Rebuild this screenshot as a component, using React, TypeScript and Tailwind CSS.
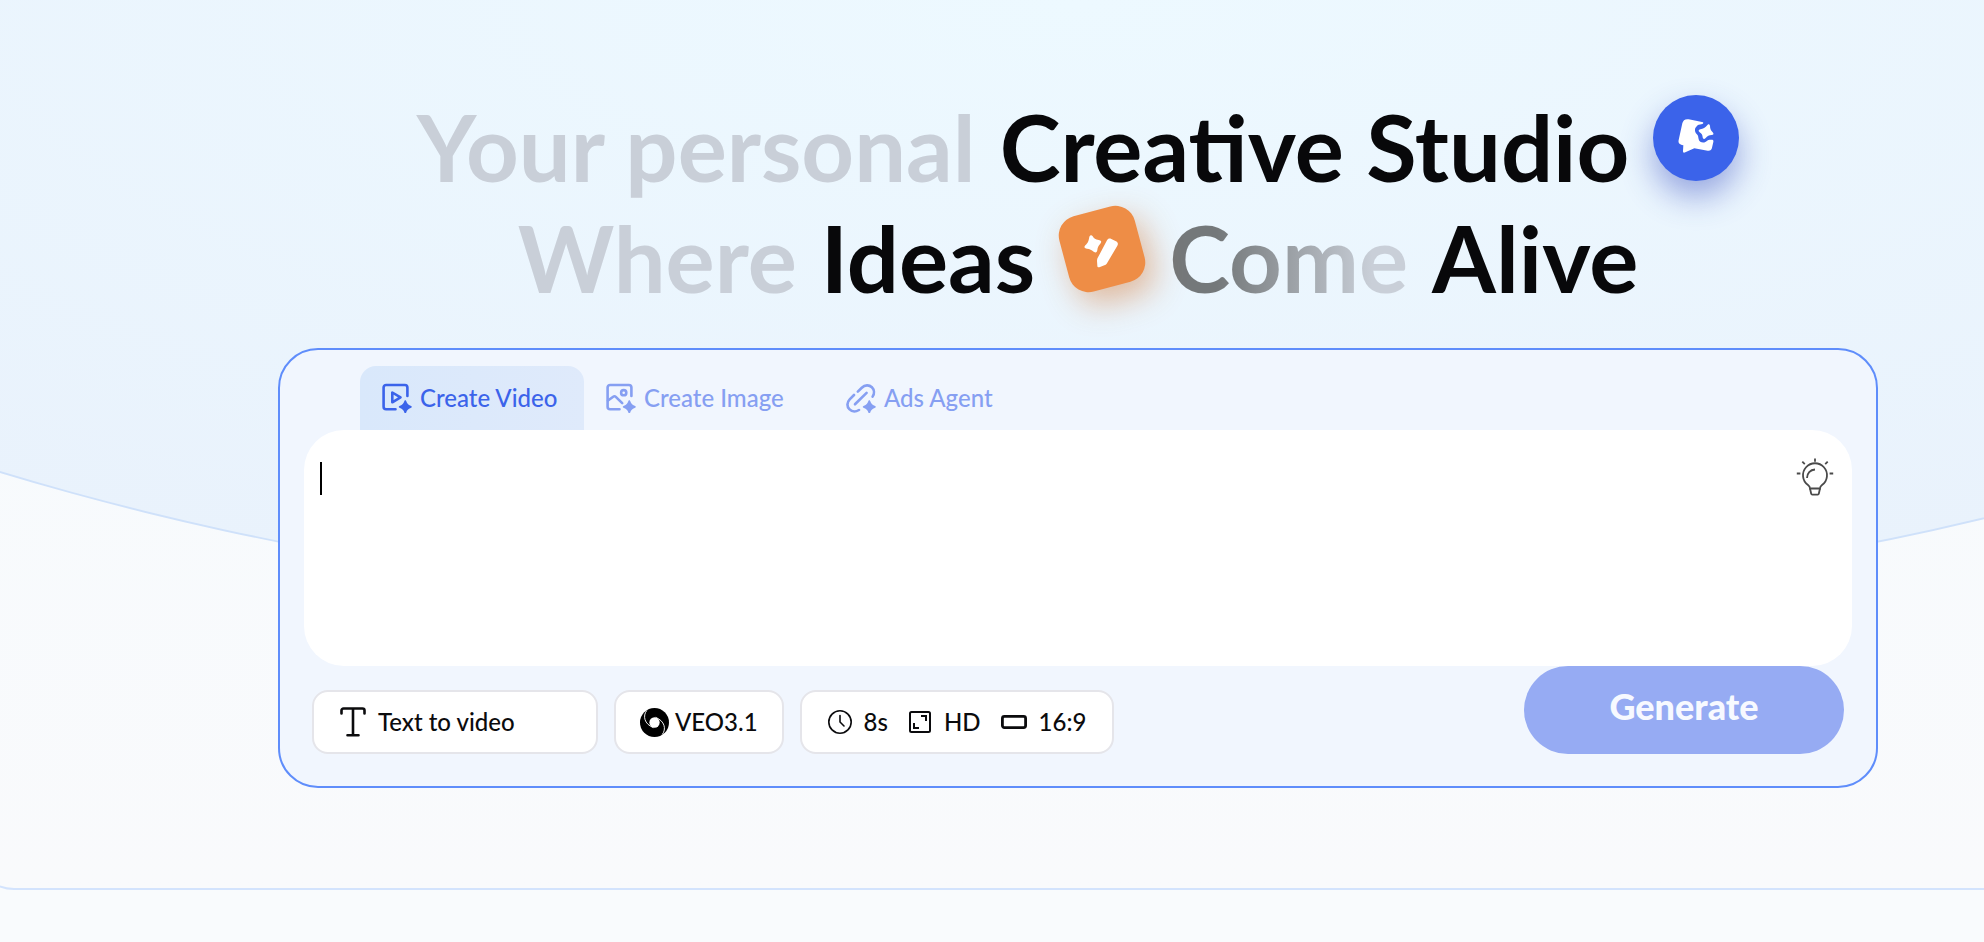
import { useState } from "react";

const tabs = [
  { id: "video", label: "Create Video", icon: VideoSparkIcon, width: "w-56" },
  { id: "image", label: "Create Image", icon: ImageSparkIcon, width: "w-60" },
  { id: "ads", label: "Ads Agent", icon: LinkSparkIcon, width: "w-56" },
];

const spark =
  "M23.3 17.2c.6 0 .8.5 1 1.1.8 2.3 1.9 3.5 4.3 4.4.7.3 1.2.5 1.2 1.1s-.5.8-1.2 1.1c-2.4.9-3.5 2.1-4.3 4.4-.2.6-.4 1.1-1 1.1s-.8-.5-1-1.1c-.8-2.3-1.9-3.5-4.3-4.4-.7-.3-1.2-.5-1.2-1.1s.5-.8 1.2-1.1c2.4-.9 3.5-2.1 4.3-4.4.2-.6.4-1.1 1-1.1z";

const frame =
  "M25.4 13V4.5a2.5 2.5 0 0 0-2.5-2.5H4.1a2.5 2.5 0 0 0-2.5 2.5v19.3a2.5 2.5 0 0 0 2.5 2.5h9.4";

function VideoSparkIcon() {
  return (
    <svg className="size-[30px] shrink-0" viewBox="0 0 30 30" fill="none" stroke="currentColor" strokeWidth="2.6" strokeLinecap="round" strokeLinejoin="round">
      <path d={frame} />
      <path d="M10.3 9.5v9.8l8.2-4.9z" />
      <path d={spark} fill="currentColor" stroke="none" />
    </svg>
  );
}

function ImageSparkIcon() {
  return (
    <svg className="size-[30px] shrink-0" viewBox="0 0 30 30" fill="none" stroke="currentColor" strokeWidth="2.6" strokeLinecap="round" strokeLinejoin="round">
      <path d={frame} />
      <circle cx="17.7" cy="9.7" r="2.6" />
      <path d="M2 17.5l5.2-3.8a2 2 0 0 1 2.6.2l6.4 6.2" />
      <path d={spark} fill="currentColor" stroke="none" />
    </svg>
  );
}

function LinkSparkIcon() {
  return (
    <svg className="size-[30px] shrink-0" viewBox="0 0 30 30" fill="none" stroke="currentColor" strokeWidth="2.6" strokeLinecap="round" strokeLinejoin="round">
      <path d="M9 21.3L20.6 9.9" />
      <path d="M11.8 8.6l4-3.9c3.1-3 7.4-3 10.1-.4 2.5 2.5 2.7 6.3.7 9.3" />
      <path d="M8 12l-4.3 4.3c-2.9 3-2.9 7.3-.4 9.9 2.6 2.6 6.5 2.8 9.7.8" />
      <path d={spark} fill="currentColor" stroke="none" />
    </svg>
  );
}

function BulbIcon() {
  return (
    <svg className="size-[38px]" viewBox="0 0 38 38" fill="none" stroke="currentColor" strokeWidth="1.8">
      <path d="M14 30.5c0-1.6-.4-2.3-2-3.5a12 12 0 1 1 14 0c-1.6 1.2-2 1.9-2 3.5z" />
      <path d="M14 30.5l1.2 5.2c.1.6.5.9 1.1.9h5.4c.6 0 1-.3 1.1-.9l1.2-5.2" />
      <path d="M11 20c0-4.7 3.2-8.2 8-8.5" />
      <path d="M19 .5v3.2M.8 15.5h3.6M33.6 15.5h3.6M6.3 3.6l2.5 2.5M31.7 3.6l-2.5 2.5" />
    </svg>
  );
}

function TextIcon() {
  return (
    <svg className="h-[30px] w-[26px]" viewBox="0 0 26 30" fill="none" stroke="currentColor" strokeWidth="2.6" strokeLinecap="round" strokeLinejoin="round">
      <path d="M1.5 6.5V3.5a2 2 0 0 1 2-2h19a2 2 0 0 1 2 2v3M13 1.5v26.8M7.5 28.3h11" />
    </svg>
  );
}

function SwirlIcon() {
  return (
    <svg className="size-[29px]" viewBox="0 0 28 28" fill="none">
      <circle cx="14" cy="14" r="14" fill="#000" />
      <circle cx="14" cy="14" r="5" fill="#fff" />
      <path d="M6.5 2.5C2.5 7.5 4 15.500 13 19" stroke="#fff" strokeWidth=".9" />
      <path d="M21.5 25.5C25.5 20.500 24 12.500 15 9" stroke="#fff" strokeWidth=".9" />
    </svg>
  );
}

function ClockIcon() {
  return (
    <svg className="size-6" viewBox="0 0 24 24" fill="none" stroke="currentColor" strokeWidth="1.6" strokeLinecap="round">
      <circle cx="12" cy="12" r="11.2" />
      <path d="M12 5.5V12l4 4" />
    </svg>
  );
}

function QualityIcon() {
  return (
    <svg className="size-6" viewBox="0 0 24 24" fill="none" stroke="currentColor" strokeWidth="2">
      <rect x="2" y="2" width="20" height="20" rx="1.5" />
      <path d="M13 6h5v5M6 13v5h5" />
    </svg>
  );
}

function RatioIcon() {
  return (
    <svg className="h-6 w-[26px]" viewBox="0 0 26 24" fill="none" stroke="currentColor" strokeWidth="2.8">
      <rect x="1.4" y="6.4" width="23.2" height="11.2" rx="2" />
    </svg>
  );
}

function StudioBadge() {
  return (
    <span className="mb-[18px] size-[86px] rounded-full bg-[#3b63ea] shadow-[0_16px_32px_rgba(48,70,190,0.45)]">
      <svg className="size-full" viewBox="43 44 258 258" fill="#fff">
        <path d="M150 117l40 8c5 1 5 4 1 6-10 2-14 2-18 8-6 5-5 16 1 22 6 5 4 9 6 16 2 9 13 12 20 8 6-3 7-7 13-7h8c3 0 4 3 3 7l-4 17c-1 7-6 10-13 9l-40-7-27 12c-5 2-7 1-7-4l1-17c-12-3-16-7-14-16l11-50c2-9 9-14 19-12z" />
        <path d="M207 133c3-3 6-1 7 3 0 8 2 13 8 20 4 5 3 8-3 8-8 0-13 3-18 9-4 5-8 4-9-2-1-8-3-11-9-15-5-4-4-8 2-9 9-2 14-5 22-14z" />
      </svg>
    </span>
  );
}

function IdeasBadge() {
  return (
    <span className="mb-[18px] grid size-[86px] place-items-center">
      <span className="flex size-[78px] -rotate-15 items-center justify-center rounded-[20px] bg-[#ee8d46] shadow-[6px_14px_32px_rgba(210,110,40,0.45)]">
        <svg className="size-[86px] shrink-0 rotate-15" viewBox="47 46 258 258" fill="#fff">
          <path d="M138 138c3-5 7-5 10-1 4 7 8 10 18 11 8 1 10 5 5 11-6 7-8 11-9 19-1 8-5 9-11 5-7-6-11-8-20-9-8-1-10-5-5-10 8-8 10-13 12-26z" />
          <path d="M191 149c3-5 7-7 13-4l14 7c6 3 7 8 4 13l-31 53c-2 3-4 5-8 6l-13 5c-5 2-8 0-8-4l-1-15c0-4 1-7 3-10z" />
        </svg>
      </span>
    </span>
  );
}

export default function App() {
  const [active, setActive] = useState("video");
  const [prompt, setPrompt] = useState("");

  return (
    <div className="min-h-screen overflow-hidden bg-[#f9fbfd] pl-[172px] font-['Lato',sans-serif]">
      <section className="relative -mx-[198px] overflow-hidden rounded-b-[40px] border-b-2 border-[#d3e3fd] bg-linear-to-b from-[#f6fbfe] to-[#f9fafc] px-[198px] pt-[91px] pb-[100px]">
        {/* Curved backdrop */}
        <div className="absolute inset-x-[198px] top-0 h-[619px]">
          <div className="absolute bottom-0 -left-1/2 h-[1488px] w-[200%] rounded-[50%] border-2 border-[#cfe1fa] bg-[radial-gradient(ellipse_1800px_620px_at_50%_869px,#edf9ff,#e9f2fc)]" />
        </div>

        <main className="relative mx-auto max-w-[1600px]">
          <h1 className="mb-[35px] text-[92px] leading-[111px] font-bold whitespace-nowrap text-[#08080a]">
            <span className="flex h-[111px] items-center justify-center gap-6">
              <span className="text-[#c9cfd8]">Your personal</span>
              <span>Creative Studio</span>
              <StudioBadge />
            </span>
            <span className="flex h-[111px] items-center justify-center gap-6">
              <span className="text-[#c9cfd8]">Where</span>
              <span>Ideas</span>
              <IdeasBadge />
              <span className="bg-linear-to-r from-[#74787a] from-20% to-[#c9cfd8] to-85% bg-clip-text text-transparent">
                Come
              </span>
              <span>Alive</span>
            </span>
          </h1>

          {/* Prompt panel */}
          <div className="rounded-[40px] border-2 border-[#5f8dfb] bg-[#f1f6fe] px-6 pt-4 pb-8">
            <div role="tablist" className="flex px-14">
              {tabs.map((tab) => (
                <button
                  key={tab.id}
                  type="button"
                  role="tab"
                  aria-selected={active === tab.id}
                  onClick={() => setActive(tab.id)}
                  className={`flex h-16 items-center gap-2 rounded-t-2xl px-[22px] text-2xl font-medium whitespace-nowrap ${tab.width} ${
                    active === tab.id
                      ? "bg-linear-to-r from-[#d9e8fb] to-[#dfeafb] text-[#3b63ea]"
                      : "text-[#869ff2]"
                  }`}
                >
                  <tab.icon />
                  {tab.label}
                </button>
              ))}
            </div>

            <div className="relative flex rounded-[40px] bg-white">
              <textarea
                aria-label="Prompt"
                value={prompt}
                onChange={(e) => setPrompt(e.target.value)}
                className="h-[236px] w-full resize-none rounded-[40px] px-4 py-8 text-2xl outline-none"
              />
              {prompt === "" && (
                <span className="pointer-events-none absolute top-8 left-4 h-[33px] w-[2px] bg-black" />
              )}
              <button type="button" aria-label="Prompt ideas" className="absolute top-7 right-4.5 text-[#4a4a4a]">
                <BulbIcon />
              </button>
            </div>

            <div className="flex items-end gap-4 px-2 text-2xl font-medium text-[#0b0b0d]">
              <button type="button" className="flex h-16 w-[286px] items-center gap-3 rounded-2xl border-2 border-[#e5e5ea] bg-white px-[26px]">
                <TextIcon />
                Text to video
              </button>
              <button type="button" className="flex h-16 items-center gap-1.5 rounded-2xl border-2 border-[#e5e5ea] bg-white px-6">
                <SwirlIcon />
                VEO3.1
              </button>
              <button type="button" className="flex h-16 items-center gap-5 rounded-2xl border-2 border-[#e5e5ea] bg-white px-[26px]">
                <span className="flex items-center gap-3">
                  <ClockIcon />
                  8s
                </span>
                <span className="flex items-center gap-3">
                  <QualityIcon />
                  HD
                </span>
                <span className="flex items-center gap-3">
                  <RatioIcon />
                  16:9
                </span>
              </button>
              <button
                type="button"
                className="ml-auto h-[88px] w-80 rounded-full bg-[#96abf3] pb-2 text-4xl font-black text-[#f7f9ff]"
              >
                Generate
              </button>
            </div>
          </div>
        </main>
      </section>
    </div>
  );
}
